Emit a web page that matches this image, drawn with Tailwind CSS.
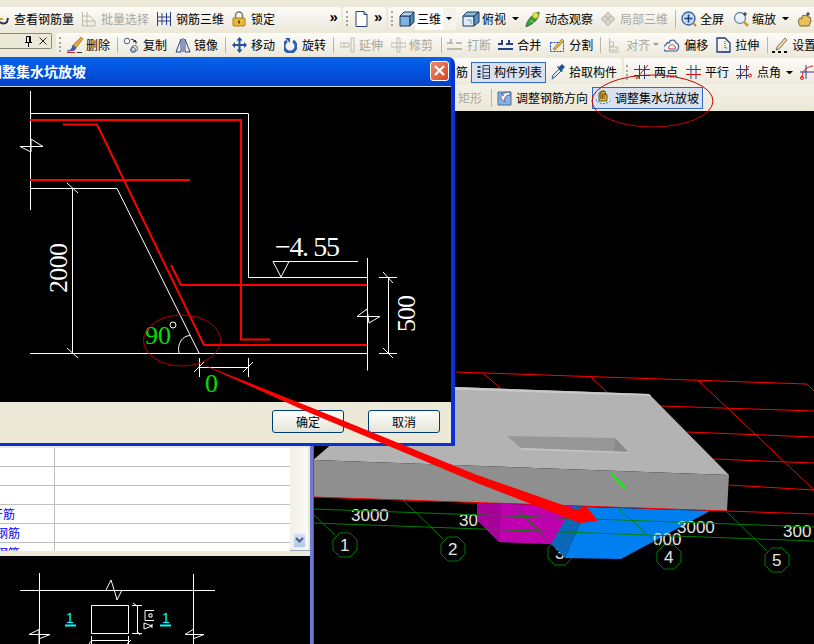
<!DOCTYPE html>
<html lang="zh-CN">
<head>
<meta charset="UTF-8">
<title>调整集水坑放坡</title>
<script src="https://cdn.jsdelivr.net/npm/@tailwindcss/browser@4"></script>
</head>
<body class="w-[814px] h-[644px] overflow-hidden bg-[#ece9d8]">
<div class="relative w-[814px] h-[644px] overflow-hidden flex flex-col pt-[7px] text-[12px] leading-none text-black whitespace-nowrap font-['Noto_Sans_CJK_SC','Liberation_Sans',sans-serif]">

  <!-- toolbar row 1 -->
  <div class="flex flex-none h-[23px] gap-[2px]">
    <div class="flex items-center w-[341px] rounded-r-[3px] bg-linear-to-b from-[#fdfcf9] to-[#ece9dc]">
      <svg class="flex-none w-[10px] h-[16px]" viewBox="0 0 10 16"><path d="M0 11c2 2 5 2 7 0l1-4" fill="none" stroke="#334" stroke-width="2"/><path d="M0 8h3" stroke="#c9a227" stroke-width="2"/></svg>
      <span class="ml-[4px]">查看钢筋量</span>
      <div class="flex items-center gap-1 ml-[7px] text-[#aaa9a0]">
        <svg class="flex-none w-4 h-4" viewBox="0 0 16 16" fill="none" stroke="#b9b8ae"><path d="M1.500 1v14M6 1v14M1 5h8l5 5v5H1M1 10h13"/></svg>批量选择</div>
      <div class="flex items-center gap-1 ml-[7px]">
        <svg class="flex-none w-4 h-4" viewBox="0 0 16 16" fill="none" stroke="#27408b"><path d="M1.500 1v14M14.500 1v14M6 2v12M10.500 2v12M1 6h14M1 10h14"/></svg>钢筋三维</div>
      <div class="flex items-center gap-1 ml-[7px]">
        <svg class="flex-none w-4 h-4" viewBox="0 0 16 16"><path d="M4.500 7V4.500a3.500 3.500 0 0 1 7 0V7" fill="none" stroke="#777" stroke-width="1.500"/><rect x="2" y="7" width="12" height="8" rx="1" fill="#e8b93a" stroke="#a97c14"/><rect x="7" y="9.500" width="2" height="3" fill="#6d4b08"/></svg>锁定</div>
      <span class="ml-auto mr-[3px] mb-[5px] text-[15px] font-bold font-['Liberation_Sans']">»</span>
    </div>
    <div class="flex items-center w-[43px] rounded-[3px] bg-linear-to-b from-[#fdfcf9] to-[#ece9dc]">
      <span class="flex-none ml-[3px] w-[2px] h-[15px] border-l-2 border-dotted border-[#a8a698]"></span>
      <svg class="flex-none ml-[7px] w-[13px] h-4" viewBox="0 0 13 16"><path d="M1 .5h8l3 3V15.500H1z" fill="#fff" stroke="#26406e"/><path d="M9 .5v3h3" fill="#cfd8e8" stroke="#26406e"/></svg>
      <span class="ml-[6px] mb-[5px] text-[15px] font-bold font-['Liberation_Sans']">»</span>
    </div>
    <div class="flex items-center flex-1 rounded-l-[3px] bg-linear-to-b from-[#fdfcf9] to-[#ece9dc]">
      <span class="flex-none ml-[3px] w-[2px] h-[15px] border-l-2 border-dotted border-[#a8a698]"></span>
      <svg class="flex-none ml-[6px] w-4 h-4" viewBox="0 0 16 16" stroke="#1d3a5c"><path d="M1 5h10v10H1z" fill="#7fb2de"/><path d="M1 5l4-4h10L11 5z" fill="#b5d3ec"/><path d="M11 5l4-4v10l-4 4z" fill="#4f86b6"/></svg>
      <span class="flex-none w-[28px] h-[22px] pl-[2px] flex items-center bg-white">三维</span>
      <span class="flex-none w-[13px] h-[22px] flex items-center justify-center bg-[#f4f3ec]"><span class="border-x-[3px] border-t-[3px] border-x-transparent border-t-black"></span></span>
      <svg class="flex-none ml-[6px] w-[18px] h-4" viewBox="0 0 18 16" stroke="#1d3a5c"><path d="M1 5h11v10H1z" fill="#dcebf6"/><path d="M1 5l4-4h12l-5 4z" fill="#8fbbdc"/><path d="M12 5l5-4v10l-5 4z" fill="#5a92bf"/><path d="M5 9h4v4" fill="none" stroke="#7fa3c2"/></svg>
      <span class="ml-[2px]">俯视</span>
      <span class="ml-[6px] w-[7px] border-x-[3px] border-t-[3px] border-x-transparent border-t-black"></span>
      <div class="flex items-center gap-1 ml-[6px]">
        <svg class="flex-none w-4 h-4" viewBox="0 0 16 16"><path d="M1 16C1 10 7 3 14 1c1 6-5 12-13 15z" fill="#3f9a3a" stroke="#1d5e1d" stroke-width=".7"/><circle cx="10.500" cy="4.500" r="3" fill="#e8df4a" stroke="#8a8a20" stroke-width=".5"/><path d="M5 9l4 3" stroke="#a8d890"/></svg>动态观察</div>
      <div class="flex items-center gap-1 ml-[7px] text-[#aaa9a0]">
        <svg class="flex-none w-4 h-4" viewBox="0 0 16 16" fill="#d7d5ca" stroke="#bbb9ad"><path d="M1 8l7-7 7 7-7 7z"/><path d="M4.500 4.500l7 7M11.500 4.500l-7 7"/></svg>局部三维</div>
      <span class="flex-none ml-[7px] w-px h-[18px] bg-[#b8b6a8]"></span>
      <div class="flex items-center gap-[3px] ml-[5px]">
        <svg class="flex-none w-4 h-4" viewBox="0 0 16 16"><circle cx="7.500" cy="7.500" r="6.500" fill="#c5d9f1" stroke="#37609c" stroke-width="1.300"/><path d="M7.500 3.500v8M3.500 7.500h8" stroke="#1d3f7c" stroke-width="1.500"/><path d="M12 12l3 3" stroke="#c98a1b" stroke-width="2"/></svg>全屏</div>
      <div class="flex items-center gap-[2px] ml-[9px]">
        <svg class="flex-none w-[17px] h-4" viewBox="0 0 17 16"><circle cx="7" cy="7" r="5.500" fill="#eaf2fb" stroke="#6d86a8" stroke-width="1.300"/><path d="M11 11l4 4" stroke="#c9a22a" stroke-width="2.500"/><path d="M12 1v4M10 3h4" stroke="#223" /></svg>缩放</div>
      <span class="ml-[6px] w-[7px] border-x-[3px] border-t-[3px] border-x-transparent border-t-black"></span>
      <svg class="flex-none ml-[8px] w-[17px] h-4" viewBox="0 0 17 16"><path d="M3 15c-2-4-2-7 0-8l2 1V5l2-1 1 1 2-1 1 2 2 0 1 4-2 5z" fill="#e8c15a" stroke="#7a6a2a"/><path d="M11 1v4M9 3h4" stroke="#223"/></svg>
    </div>
  </div>

  <!-- toolbar row 2, with the panel caption on its left -->
  <div class="flex flex-none h-[23px] mt-[3px]">
    <div class="flex-none w-[52px] h-[16px] flex items-center justify-end gap-[6px] pr-[4px] border border-l-0 border-[#8c8a7c] rounded-r-[2px] bg-[#ece9d8]">
      <svg class="w-[9px] h-[11px]" viewBox="0 0 9 11" fill="none" stroke="#000"><path d="M2.500.5h4v6h-4zM1 6.500h7M4.500 7v4"/><path d="M5.500 1v5" /></svg>
      <svg class="w-[8px] h-[8px]" viewBox="0 0 8 8" stroke="#222"><path d="M.5.5l7 7M7.500.5l-7 7"/></svg>
    </div>
    <div class="flex items-center flex-none w-[758px] ml-[4px] rounded-l-[3px] bg-linear-to-b from-[#fdfcf9] to-[#ece9dc]">
      <span class="flex-none ml-[3px] w-[2px] h-[15px] border-l-2 border-dotted border-[#a8a698]"></span>
      <div class="flex items-center gap-[3px] ml-[5px]">
        <svg class="flex-none w-[17px] h-[17px]" viewBox="0 0 17 17"><path d="M7 9l8-8 2 2-7 9z" fill="#e0a63a" stroke="#8a6a1c" stroke-width=".6"/><path d="M1 15c4 0 5-3 6-6l3 3c-1 3-4 3-9 3z" fill="#3a5bb0" stroke="#1f3577" stroke-width=".5"/><path d="M1 16.500h8" stroke="#c22" /><path d="M11 16.500h5" stroke="#334"/></svg>删除</div>
      <span class="flex-none ml-[7px] w-px h-[16px] bg-[#b8b6a8]"></span>
      <div class="flex items-center gap-1 ml-[5px]">
        <svg class="flex-none w-4 h-4" viewBox="0 0 16 16" fill="none" stroke="#4a5f86"><circle cx="4" cy="4" r="2.800"/><circle cx="11.500" cy="11.500" r="3"/><circle cx="10" cy="13" r="2.500"/><path d="M8 2l5 2v3M13 4l-3 1" stroke="#223"/></svg>复制</div>
      <div class="flex items-center gap-[3px] ml-[8px]">
        <svg class="flex-none w-4 h-4" viewBox="0 0 16 16" fill="none" stroke="#27408b"><path d="M8 1v14M6 2L1 15h5zM10 2l5 13h-5z"/></svg>镜像</div>
      <span class="flex-none ml-[7px] w-px h-[16px] bg-[#b8b6a8]"></span>
      <div class="flex items-center gap-1 ml-[6px]">
        <svg class="flex-none w-[15px] h-4" viewBox="0 0 15 16" fill="#27509b"><path d="M7.500 0l3 3.500h-2V7h3.500V5l3 3-3 3V9H8.500v3.500h2l-3 3.500-3-3.500h2V9H3v2L0 8l3-3v2h3.500V3.500h-2z"/></svg>移动</div>
      <div class="flex items-center gap-[5px] ml-[9px]">
        <svg class="flex-none w-[13px] h-4" viewBox="0 0 13 16"><path d="M3 4a6 6 0 1 0 6 0" fill="none" stroke="#2d5fb2" stroke-width="3"/><path d="M1 1h5v5z" fill="#2d5fb2"/></svg>旋转</div>
      <span class="flex-none ml-[7px] w-px h-[16px] bg-[#b8b6a8]"></span>
      <div class="flex items-center gap-[3px] ml-[6px] text-[#a8a79c]">
        <svg class="flex-none w-4 h-4" viewBox="0 0 16 16" fill="none" stroke="#bdbbb0"><path d="M11 1h3v14h-3zM0 6h9v4H0zM4 6v4"/></svg>延伸</div>
      <div class="flex items-center gap-[3px] ml-[8px] text-[#a8a79c]">
        <svg class="flex-none w-[15px] h-4" viewBox="0 0 15 16" fill="none" stroke="#bdbbb0"><path d="M6 1h3v14H6zM0 6h15v4H0z"/></svg>修剪</div>
      <span class="flex-none ml-[8px] w-px h-[16px] bg-[#b8b6a8]"></span>
      <div class="flex items-center gap-[5px] ml-[5px] text-[#a8a79c]">
        <svg class="flex-none w-[15px] h-4" viewBox="0 0 15 16" fill="none" stroke="#bdbbb0" stroke-width="2"><path d="M0 6h6M9 6h6M0 12h15M4 2v4"/></svg>打断</div>
      <div class="flex items-center gap-1 ml-[7px]">
        <svg class="flex-none w-[15px] h-4" viewBox="0 0 15 16" fill="none" stroke="#27408b" stroke-width="2"><path d="M0 7h5M8 7h7M0 12h15M4 3v4M11 3v4"/></svg>合并</div>
      <div class="flex items-center gap-1 ml-[8px]">
        <svg class="flex-none w-4 h-4" viewBox="0 0 16 16"><path d="M1.500 5.500h13v9h-13z" fill="none" stroke="#1c3fc7" stroke-dasharray="2 1"/><path d="M4 12L13 2l2 2-9 9z" fill="#e3b547" stroke="#7d5f15" stroke-width=".6"/></svg>分割</div>
      <span class="flex-none ml-[7px] w-px h-[16px] bg-[#b8b6a8]"></span>
      <div class="flex items-center gap-[6px] ml-[7px] text-[#a8a79c]">
        <svg class="flex-none w-[12px] h-4" viewBox="0 0 12 16" fill="none" stroke="#bdbbb0"><path d="M1.500 1v14h10M1.500 5h4v4h-4zM1.500 10h8v3h-8z"/></svg>对齐</div>
      <span class="ml-[3px] w-[7px] border-x-[3px] border-t-[3px] border-x-transparent border-t-[#999]"></span>
      <div class="flex items-center gap-1 ml-[5px]">
        <svg class="flex-none w-4 h-4" viewBox="0 0 16 16"><path d="M3 14a3 3 0 0 1-1-6c0-2 2-3 3-2 1-4 6-4 7 0 3 0 4 6 0 8z" fill="#f6f6f6" stroke="#37609c" stroke-width="1.200"/><path d="M5 12c-1-2 0-3 1-3 1-2 3-2 4 0 2 0 2 3 1 3z" fill="none" stroke="#d33"/></svg>偏移</div>
      <div class="flex items-center gap-1 ml-[8px]">
        <svg class="flex-none w-[15px] h-4" viewBox="0 0 15 16" fill="none" stroke="#1d3a7c"><path d="M1 1h8l5 5v9H1z" stroke-width="1.300"/><path d="M9 4v7h3M6 15h8" stroke-dasharray="1 1"/></svg>拉伸</div>
      <span class="flex-none ml-[8px] w-px h-[16px] bg-[#b8b6a8]"></span>
      <div class="flex items-center gap-1 ml-[4px]">
        <svg class="flex-none w-4 h-4" viewBox="0 0 16 16"><path d="M5 10l8-9 2 2-8 9-3 1z" fill="#e8d9a6" stroke="#5d4f22" stroke-width=".7"/><path d="M0 15h3M6 15h3M12 15h3" stroke="#111" stroke-width="2"/></svg>设置</div>
    </div>
  </div>

  <!-- panels and 3D view -->
  <div class="flex flex-1 min-h-0 mt-[2px]">
    <aside class="flex flex-col flex-none w-[310px] overflow-hidden">
      <div class="flex flex-1 min-h-0 justify-end flex-col">
        <div class="flex h-[103px] pr-[2px] border-b border-[#8fa2b8]">
          <div class="flex-1 min-w-0 h-[103px] overflow-hidden bg-white text-[#0000ff]">
            <div class="flex h-[19px] border-b-[1.500px] border-[#c0c0c0]"><div class="w-[55px] border-r-[1.500px] border-[#c0c0c0]"></div></div>
            <div class="flex h-[19px] border-b-[1.500px] border-[#c0c0c0]"><div class="w-[55px] border-r-[1.500px] border-[#c0c0c0]"></div></div>
            <div class="flex h-[19px] border-b-[1.500px] border-[#c0c0c0]"><div class="w-[55px] border-r-[1.500px] border-[#c0c0c0]"></div></div>
            <div class="flex h-[19px] border-b-[1.500px] border-[#c0c0c0]"><div class="w-[55px] border-r-[1.500px] border-[#c0c0c0] flex items-center"><span class="-ml-[9px]">开筋</span></div></div>
            <div class="flex h-[19px] border-b-[1.500px] border-[#c0c0c0]"><div class="w-[55px] border-r-[1.500px] border-[#c0c0c0] flex items-center"><span class="-ml-[4px]">钢筋</span></div></div>
            <div class="flex h-[19px]"><div class="w-[55px] border-r-[1.500px] border-[#c0c0c0] flex items-center"><span class="-ml-[4px]">钢筋</span></div></div>
          </div>
          <div class="flex flex-col justify-end flex-none w-[18px] pb-[2px] pl-[3px] pr-[2px] bg-linear-to-r from-[#f1efe6] to-[#fbfaf5]">
            <div class="flex items-center justify-center h-[15px] rounded-[2px] bg-linear-to-b from-[#d5e0f7] to-[#b2c5ee] border border-[#e6edfb]">
              <svg class="w-[9px] h-[7px]" viewBox="0 0 9 7" fill="none" stroke="#4d6185" stroke-width="2"><path d="M1 1l3.500 3.500L8 1"/></svg>
            </div>
          </div>
        </div>
      </div>
      <div class="flex-none h-[5px]"></div>
      <div class="flex-none h-[88px] bg-black">
        <svg class="block w-[310px] h-[88px]" viewBox="0 556 310 88" fill="none" stroke="#fff">
          <path d="M20 590.500H215M39.500 573V644M193.500 574V644"/>
          <path d="M106 590l5-10 5 16 1 4 5-10"/>
          <path d="M91.500 605.500h37v28h-37zM91.500 636v8M128.500 636v8M91 640.500h38M89 644l3-4M127 644l4-4"/>
          <path d="M137.500 605v29M132 605.500h10M132 633.500h10M133 603l4 3M137 631l3 4"/>
          <path d="M29 634.500h21l-10 4M29 634.500l10-5v15M185 634.500h19l-10 4M185 634.500l8-5"/>
          <path d="M154 610.500h-9v10h9M149 614h3v3h-3zM144 623l8 3-8 3zM152 624v4"/>
          <text x="66" y="623" fill="#00ffff" stroke="none" font-family="Liberation Sans" font-size="14">1</text>
          <path d="M65 625.500h11" stroke="#00ffff" stroke-width="2"/>
          <text x="162" y="623" fill="#00ffff" stroke="none" font-family="Liberation Sans" font-size="14">1</text>
          <path d="M160 625.500h11" stroke="#00ffff" stroke-width="2"/>
        </svg>
      </div>
    </aside>
    <div class="flex-none w-[4px] bg-[#6f7bd3] border-r border-[#4c57a8]"></div>

    <main class="flex flex-col flex-1 min-w-0">
      <!-- toolbar row 3 -->
      <div class="flex flex-none h-[26px]">
        <div class="flex items-center flex-none w-[308px] pt-[2px] rounded-r-[3px] bg-linear-to-b from-[#fdfcf9] to-[#ece9dc]">
          <span class="ml-[142px]">筋</span>
          <div class="flex items-center gap-1 flex-none ml-[3px] w-[75px] h-[21px] pl-[5px] border border-[#316ac5] bg-[#d9e1ee]">
            <svg class="flex-none w-[13px] h-[14px]" viewBox="0 0 13 14" fill="none" stroke="#33415e"><path d="M6 .5h6.500v13H6zM6 4h6.500M6 7.500h6.500M6 11h6.500"/><path d="M.5 2h3M.5 6h3M.5 9h3M.5 12h3" stroke-width="2"/></svg>
            构件列表</div>
          <div class="flex items-center gap-1 ml-[5px]">
            <svg class="flex-none w-[14px] h-4" viewBox="0 0 14 16"><path d="M1 15l1-4 6-6 2 2-6 6z" fill="#d4e4f6" stroke="#2d5fa8"/><path d="M8 3l3-3 3 3-3 3 1 1-1 1-5-5 1-1z" fill="#244e96"/></svg>拾取构件</div>
        </div>
        <div class="flex items-center flex-1 ml-[2px] pt-[2px] rounded-l-[3px] bg-linear-to-b from-[#fdfcf9] to-[#ece9dc]">
          <span class="flex-none ml-[2px] w-[2px] h-[15px] border-l-2 border-dotted border-[#a8a698]"></span>
          <div class="flex items-center gap-1 ml-[6px]">
            <svg class="flex-none w-4 h-4" viewBox="0 0 16 16" fill="none"><path d="M0 5.500h16M0 11.500h16M5.500 1v14M10.500 1v14" stroke="#27408b"/><path d="M2 15L14 1" stroke="#d11"/><circle cx="4" cy="13" r="1.500" fill="#3a9a3a"/></svg>两点</div>
          <div class="flex items-center gap-1 ml-[8px]">
            <svg class="flex-none w-[15px] h-4" viewBox="0 0 15 16" fill="none"><path d="M5 1v14M10 1v14" stroke="#27408b"/><path d="M0 5.500h15M0 10.500h15" stroke="#d11"/></svg>平行</div>
          <div class="flex items-center gap-[5px] ml-[7px]">
            <svg class="flex-none w-4 h-4" viewBox="0 0 16 16" fill="none"><path d="M0 5.500h13M0 11.500h13M4.500 1v14M10.500 1v14" stroke="#27408b"/><path d="M1 15L13 2" stroke="#d11"/><circle cx="14" cy="11.500" r="1.500" stroke="#d11"/></svg>点角</div>
          <span class="ml-[5px] w-[7px] border-x-[3px] border-t-[3px] border-x-transparent border-t-black"></span>
          <svg class="flex-none ml-[7px] w-[14px] h-4" viewBox="0 0 14 16" fill="none"><path d="M0 8h14M6 1v14" stroke="#27408b"/><path d="M2 14C2 7 6 3 13 2" stroke="#d11"/><circle cx="2" cy="14" r="1.500" stroke="#d11"/></svg>
        </div>
      </div>
      <!-- toolbar row 4 -->
      <div class="flex items-center flex-none h-[27px] bg-linear-to-b from-[#f3f1e7] to-[#ece9d8]">
        <span class="ml-[144px] text-[#a8a79c]">矩形</span>
        <span class="flex-none ml-[9px] w-px h-[18px] bg-[#b8b6a8]"></span>
        <div class="flex items-center gap-1 ml-[5px]">
          <svg class="flex-none w-[15px] h-4" viewBox="0 0 15 16"><path d="M1 2h13v13H1z" fill="#8fb0dc" stroke="#4a6ea8"/><path d="M4 9c-1-4 3-7 9-7v3c-4 0-6 2-5 7z" fill="#f2f5fb" stroke="#33507f" stroke-width=".8"/><path d="M4 3l3 3" stroke="#33507f"/></svg>调整钢筋方向</div>
        <div class="flex items-center gap-1 flex-none ml-[4px] w-[111px] h-[22px] pl-[3px] border border-[#316ac5] bg-[#d9e1ee]">
          <svg class="flex-none w-[15px] h-[16px]" viewBox="0 0 15 16"><path d="M0 9c1 6 14 6 15 0" fill="#f4f7fc" stroke="#2f6fc0" stroke-dasharray="2 1"/><path d="M3 11V3.500a.8.800 0 0 1 1.600 0V2a.8.800 0 0 1 1.600 0v-.5a.8.800 0 0 1 1.600 0V2a.8.800 0 0 1 1.600 0v3a.8.800 0 0 1 1.600 0V11z" fill="#e8b52e" stroke="#3f3208" stroke-width=".8"/><path d="M4.800 4v5M6.400 3v6M8 3v6" stroke="#3f3208" stroke-width=".7"/></svg>调整集水坑放坡</div>
      </div>
      <!-- 3D view -->
      <div class="flex-1 min-h-0 bg-black">
        <svg class="block w-[500px] h-[533px]" viewBox="314 111 500 533" font-family="Liberation Sans">
          <g stroke="#ff0000" fill="none">
            <path d="M456 372L807 384L814 391M483 373L500 388M591 377L608 393M699 381L814 490"/>
            <path d="M660 406L814 411M687 432L814 437M713 459L814 463M729 485L814 490M727 511L814 514"/>
          </g>
          <path d="M400 385L649 394L729 475L313 460z" fill="#b3b3b3"/>
          <path d="M400 385L649 394L651 396L400 388z" fill="#c9c9c9"/>
          <path d="M507 436L615 438L628 452L521 448z" fill="#979797"/>
          <path d="M615 438L628 452L614 451z" fill="#8a8a8a"/>
          <path d="M521 448L628 452V453L521 450z" fill="#c4c4c4"/>
          <path d="M313 460L729 475L727 511L313 497z" fill="#8f8f8f"/>
          <path d="M313 497L727 511" stroke="#ff0000"/>
          <path d="M612 474L625 488" stroke="#00ff00" stroke-width="2"/>
          <g fill="none" stroke="#007a00">
            <path transform="translate(345 545)" d="M-5-12H5L12-5V5L5 12H-5L-12 5V-5z"/>
            <path transform="translate(453 549)" d="M-5-12H5L12-5V5L5 12H-5L-12 5V-5z"/>
            <path transform="translate(560 553)" d="M-5-12H5L12-5V5L5 12H-5L-12 5V-5z"/>
            <path transform="translate(669 557)" d="M-5-12H5L12-5V5L5 12H-5L-12 5V-5z"/>
            <path transform="translate(777 560)" d="M-5-12H5L12-5V5L5 12H-5L-12 5V-5z"/>
          </g>
          <g fill="#e4e4e4" font-size="17">
            <text x="351" y="521">3000</text><text x="459" y="526">30</text>
            <text x="340" y="551">1</text><text x="448" y="555">2</text><text x="555" y="559">3</text><text x="664" y="563">4</text><text x="772" y="566">5</text>
          </g>
          <path d="M477 503L577 506L571 545L499 542L477 520z" fill="#c000b0"/>
          <path d="M477 503L502 504L499 542L477 520z" fill="#a60098"/>
          <path d="M573 506L587 507L565 558L551 544z" fill="#0b68b8"/>
          <path d="M587 507L710 511L621 559L565 558z" fill="#0080f0"/>
          <g fill="#e4e4e4" font-size="17">
            <text x="677" y="533">3000</text><text x="653" y="545">000</text><text x="783" y="537">300</text>
          </g>
          <g fill="none" stroke="#008000">
            <path d="M314 509L814 527M314 523L814 541"/>
            <path d="M314 515L335 535M403 500L443 539M510 503L552 543M618 508L660 546M727 512L767 551"/>
          </g>
        </svg>
      </div>
    </main>
  </div>

  <!-- dialog -->
  <div class="absolute left-[-10px] top-[57px] flex flex-col w-[465px] h-[389px] rounded-tr-[7px] bg-[#ece9d8] border-r-4 border-b-[3px] border-[#0831d9]">
    <div class="flex items-center flex-none h-[30px] rounded-tr-[4px] border-b border-[#d8d5c4] bg-linear-to-b from-[#0a62ea] via-[#0352de] to-[#0342c8]">
      <span class="text-[14px] font-bold text-white -ml-[2px] mb-[2px]">调整集水坑放坡</span>
      <div class="flex items-center justify-center ml-auto mr-[2px] mb-[2px] w-[19px] h-[20px] rounded-[3px] border border-white bg-linear-to-br from-[#ec8a6a] to-[#d8421c]">
        <svg class="w-[11px] h-[11px]" viewBox="0 0 11 11" stroke="#fff" stroke-width="2.200"><path d="M1 1l9 9M10 1l-9 9"/></svg>
      </div>
    </div>
    <div class="flex-none h-[315px] bg-black">
      <svg class="block w-[461px] h-[315px]" viewBox="-10 87 461 315" fill="none" stroke="#fff">
        <path d="M30.500 91V210M30.500 113.500H248.500V277.500H367.500M367.500 258V370.500"/>
        <path d="M30.500 188.500H117L199 353M30 353.500H367.500"/>
        <path d="M72.500 188V353M67 183L78 193M67 348L78 358"/>
        <path d="M379 277.500H397M379 353.500H397M388.500 277V353M383 272L393 283M383 348L393 358"/>
        <path d="M199.500 358V377M248.500 358V377M199 367.500H248.500M194 372L204 362M243 372L253 362"/>
        <path d="M43 146.500H20L31 152V139L43 146.500M380 316.500H357L367 309L369 323L380 316.500"/>
        <path d="M273 261.500H358M273 261.500L281 277L289 261.500"/>
        <path d="M179 353C177 344 182 336 190 335.500"/>
        <circle cx="173" cy="325" r="3"/>
        <g stroke="#ff0000" stroke-width="2">
          <path d="M30 120H241V339.500H270M63 124.500H97L204 345H367M30 180H190M171 265L181 285H367"/>
        </g>
        <g stroke="none" fill="#fff" font-family="Liberation Serif" font-size="26">
          <text x="275" y="256" font-size="28" textLength="65" lengthAdjust="spacing">−4. 55</text>
          <text transform="translate(67 293) rotate(-90)" textLength="50">2000</text>
          <text transform="translate(415 332) rotate(-90)" textLength="37">500</text>
        </g>
        <g stroke="none" fill="#00e000" font-family="Liberation Serif" font-size="26">
          <text x="145" y="344">90</text>
          <text x="205" y="392">0</text>
        </g>
      </svg>
    </div>
    <div class="flex items-center justify-end flex-1 gap-6 pr-[11px] mb-[2px]">
      <button class="w-[72px] h-[23px] rounded-[3px] border border-[#003c74] bg-linear-to-b from-white to-[#e6e4d6] text-[12px]">确定</button>
      <button class="w-[72px] h-[23px] rounded-[3px] border border-[#003c74] bg-linear-to-b from-white to-[#e6e4d6] text-[12px]">取消</button>
    </div>
  </div>

  <!-- hand-drawn annotations on top of the screenshot -->
  <svg class="absolute inset-0 w-[814px] h-[644px] pointer-events-none" viewBox="0 0 814 644" fill="none">
    <ellipse cx="182" cy="340.500" rx="38.500" ry="25.500" stroke="#b80000"/>
    <ellipse cx="652.500" cy="101" rx="60.500" ry="26" stroke="#c80000"/>
    <path d="M199 363L310 407L477 475L577 510L586 506L598 521L580 523L577 522L477 483L310 413z" fill="#ff0000"/>
  </svg>
</div>
</body>
</html>
